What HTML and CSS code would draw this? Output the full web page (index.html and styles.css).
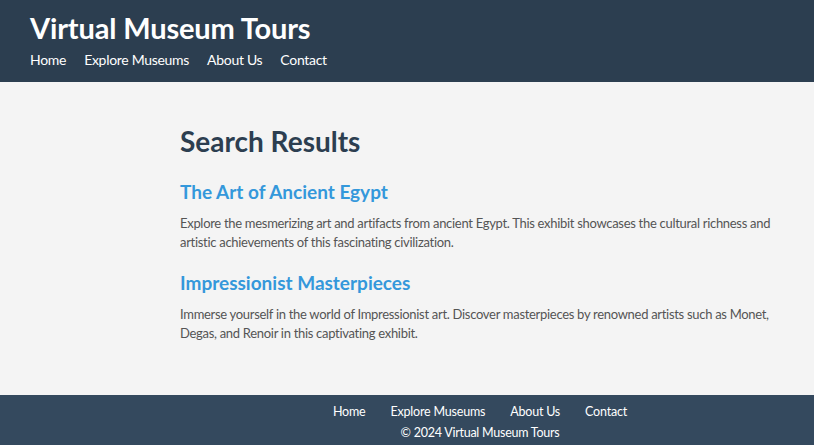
FILE: index.html
```html
<!DOCTYPE html>
<html lang="en">
<head>
<meta charset="utf-8">
<title>Virtual Museum Tours</title>
<link rel="stylesheet" href="styles.css">
</head>
<body>
<header class="site-header">
  <h1 class="site-title">Virtual Museum Tours</h1>
  <nav class="main-nav">
    <a href="#">Home</a>
    <a href="#">Explore Museums</a>
    <a href="#">About Us</a>
    <a href="#">Contact</a>
  </nav>
</header>
<main class="main">
  <section class="results">
    <h2 class="results-title">Search Results</h2>
    <article class="result">
      <h3 class="result-title">The Art of Ancient Egypt</h3>
      <p class="result-text">Explore the mesmerizing art and artifacts from ancient Egypt. This exhibit showcases the cultural richness and artistic achievements of this fascinating civilization.</p>
    </article>
    <article class="result">
      <h3 class="result-title">Impressionist Masterpieces</h3>
      <p class="result-text">Immerse yourself in the world of Impressionist art. Discover masterpieces by renowned artists such as Monet, Degas, and Renoir in this captivating exhibit.</p>
    </article>
  </section>
</main>
<footer class="site-footer">
  <nav class="footer-nav">
    <a href="#">Home</a>
    <a href="#">Explore Museums</a>
    <a href="#">About Us</a>
    <a href="#">Contact</a>
  </nav>
  <p class="copyright">&copy; 2024 Virtual Museum Tours</p>
</footer>
</body>
</html>
```
FILE: styles.css
```css
* { box-sizing: border-box; }
html, body { margin: 0; padding: 0; }
body {
  font-family: Lato, "Open Sans", sans-serif;
  background: #f4f4f4;
  color: #555;
  height: 445px;
  display: flex;
  flex-direction: column;
}
.site-header {
  background: #2c3e50;
  color: #fff;
  padding: 10px 30px 0;
  height: 82px;
}
.site-title {
  margin: 0;
  font-size: 29px;
  line-height: 36px;
  font-weight: 700;
  letter-spacing: -0.15px;
}
.main-nav {
  display: flex;
  gap: 18px;
  margin-top: 4px;
}
.main-nav a {
  color: #fff;
  text-decoration: none;
  font-size: 14px;
  line-height: 20px;
  letter-spacing: -0.3px;
}
.main {
  flex: 1;
  padding-left: 146px;
  display: flex;
  justify-content: center;
}
.results {
  width: 600px;
  padding-top: 40px;
}
.results-title {
  margin: 0 0 19px;
  font-size: 28px;
  line-height: 38px;
  color: #2c3e50;
  font-weight: 700;
}
.result { margin-bottom: 18px; }
.result-title {
  margin: 0 0 9px;
  color: #3498db;
  font-size: 19px;
  line-height: 26px;
  font-weight: 700;
}
.result-text {
  margin: 0;
  font-size: 13px;
  line-height: 19px;
  letter-spacing: -0.3px;
  color: #555;
}
.site-footer {
  background: #34495e;
  color: #fff;
  height: 50px;
  padding: 7px 0 0 146px;
  text-align: center;
}
.footer-nav {
  display: flex;
  justify-content: center;
  gap: 25px;
}
.footer-nav a {
  color: #fff;
  text-decoration: none;
  font-size: 12.5px;
  line-height: 20px;
  letter-spacing: -0.2px;
}
.copyright {
  margin: 0;
  font-size: 12.5px;
  line-height: 21px;
  letter-spacing: -0.25px;
}
```
